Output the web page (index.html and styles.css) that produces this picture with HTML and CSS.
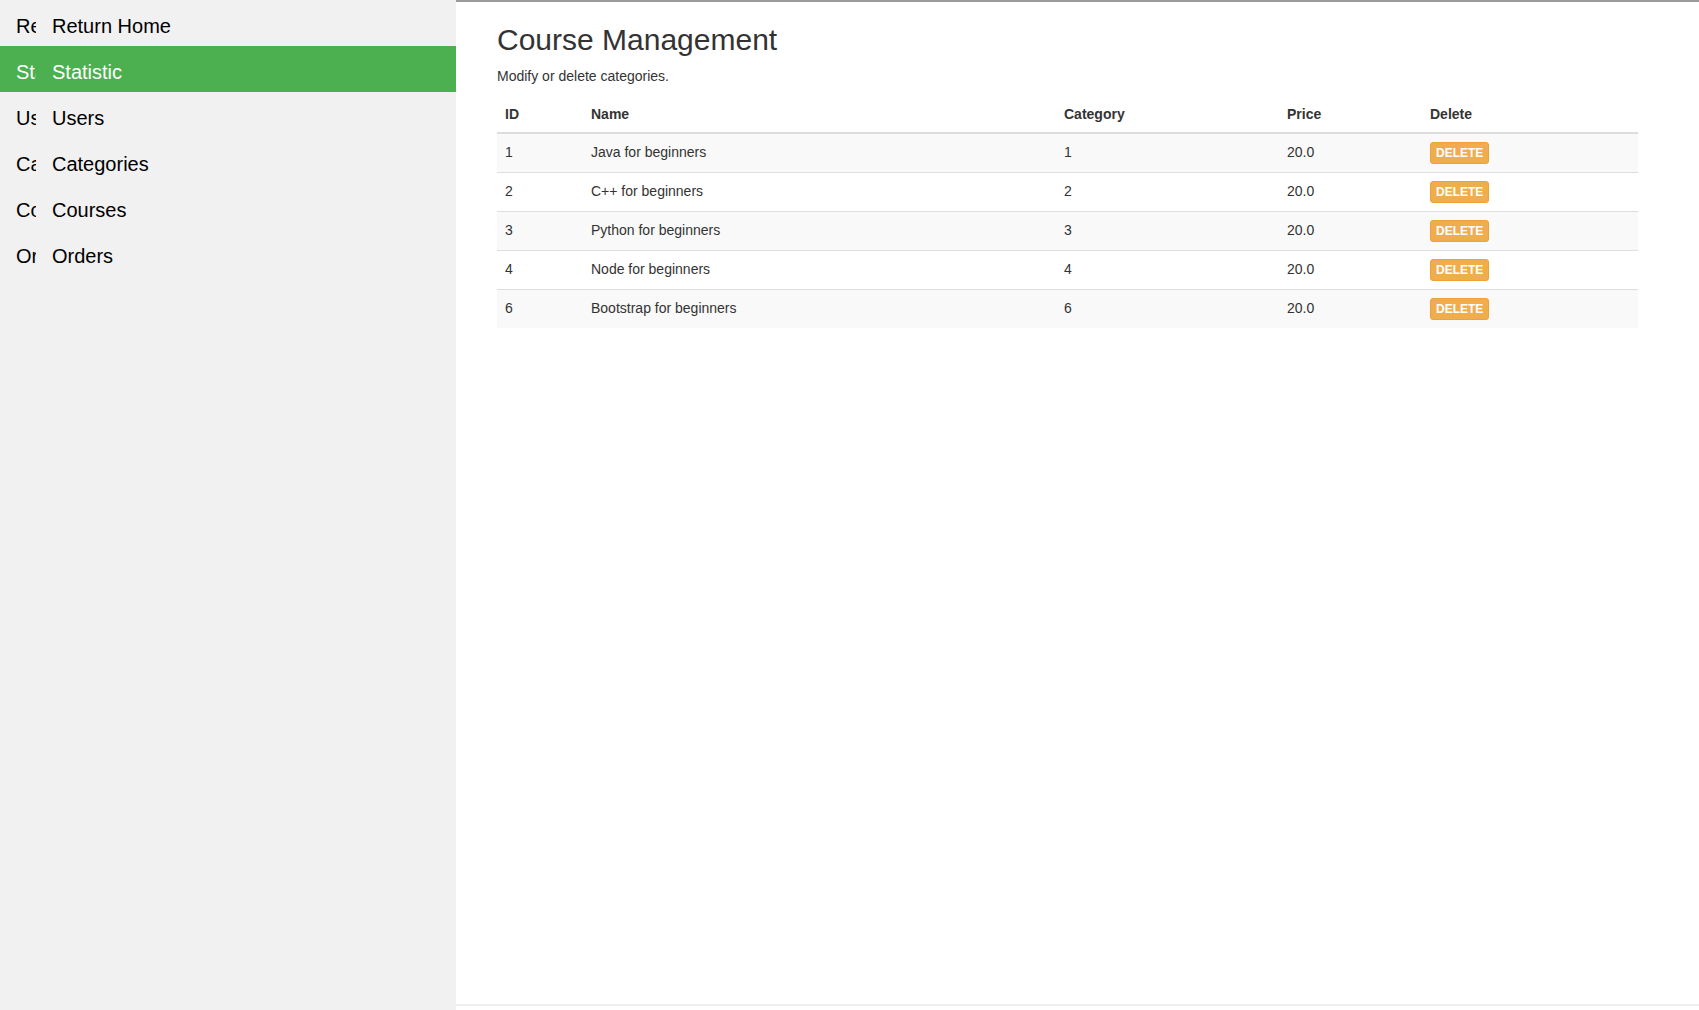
FILE: index.html
```html
<!DOCTYPE html>
<html lang="en">
<head>
<meta charset="utf-8">
<title>Course Management</title>
<link rel="stylesheet" href="styles.css">
</head>
<body>
<div class="layout">
  <nav class="sidebar">
    <a class="nav-item" href="#"><span class="nav-icon">Return Home</span><span class="nav-label">Return Home</span></a>
    <a class="nav-item active" href="#"><span class="nav-icon">Statistic</span><span class="nav-label">Statistic</span></a>
    <a class="nav-item" href="#"><span class="nav-icon">Users</span><span class="nav-label">Users</span></a>
    <a class="nav-item" href="#"><span class="nav-icon">Categories</span><span class="nav-label">Categories</span></a>
    <a class="nav-item" href="#"><span class="nav-icon">Courses</span><span class="nav-label">Courses</span></a>
    <a class="nav-item" href="#"><span class="nav-icon">Orders</span><span class="nav-label">Orders</span></a>
  </nav>
  <main class="main">
    <div class="content">
      <h2 class="title">Course Management</h2>
      <p class="subtitle">Modify or delete categories.</p>
      <table class="table">
        <thead>
          <tr>
            <th class="col-id">ID</th>
            <th class="col-name">Name</th>
            <th class="col-cat">Category</th>
            <th class="col-price">Price</th>
            <th class="col-del">Delete</th>
          </tr>
        </thead>
        <tbody>
          <tr><td>1</td><td>Java for beginners</td><td>1</td><td>20.0</td><td><button class="btn-delete">DELETE</button></td></tr>
          <tr><td>2</td><td>C++ for beginners</td><td>2</td><td>20.0</td><td><button class="btn-delete">DELETE</button></td></tr>
          <tr><td>3</td><td>Python for beginners</td><td>3</td><td>20.0</td><td><button class="btn-delete">DELETE</button></td></tr>
          <tr><td>4</td><td>Node for beginners</td><td>4</td><td>20.0</td><td><button class="btn-delete">DELETE</button></td></tr>
          <tr><td>6</td><td>Bootstrap for beginners</td><td>6</td><td>20.0</td><td><button class="btn-delete">DELETE</button></td></tr>
        </tbody>
      </table>
    </div>
    <div class="footer-line"></div>
  </main>
</div>
</body>
</html>
```

FILE: styles.css
```css
* {
  box-sizing: border-box;
}

html, body {
  margin: 0;
  padding: 0;
  height: 100%;
  overflow: hidden;
}

body {
  font-family: "Liberation Sans", Arial, Helvetica, sans-serif;
  font-size: 14px;
  line-height: 20px;
  color: #333;
  background: #fff;
}

.layout {
  display: flex;
  height: 100vh;
}

.sidebar {
  width: 456px;
  flex: 0 0 456px;
  background: #f1f1f1;
  display: flex;
  flex-direction: column;
}

.nav-item {
  display: flex;
  align-items: flex-start;
  height: 46px;
  padding: 11px 16px 5px 16px;
  font-size: 20px;
  line-height: 30px;
  color: #000;
  text-decoration: none;
  white-space: nowrap;
}

.nav-item.active {
  background: #4caf50;
  color: #fff;
}

.nav-icon {
  display: block;
  width: 20px;
  overflow: hidden;
  margin-right: 16px;
  flex: 0 0 20px;
}

.main {
  flex: 1;
  display: flex;
  flex-direction: column;
  border-top: 2px solid #9a9a9a;
  min-width: 0;
}

.content {
  flex: 1;
  padding-left: 41px;
  padding-top: 1px;
}

.title {
  margin: 20px 0 10px 0;
  font-size: 30px;
  line-height: 33px;
  font-weight: normal;
  color: #333;
}

.subtitle {
  margin: 0 0 10px 0;
}

.table {
  width: 1141px;
  border-collapse: collapse;
  border-spacing: 0;
}

.table th {
  text-align: left;
  font-weight: bold;
  padding: 8px;
  vertical-align: bottom;
  border-bottom: 2px solid #ddd;
}

.table td {
  padding: 8px;
  vertical-align: top;
  border-top: 1px solid #ddd;
}

.table tbody tr:nth-child(odd) {
  background: #f9f9f9;
}

.col-id { width: 86px; }
.col-name { width: 473px; }
.col-cat { width: 223px; }
.col-price { width: 143px; }
.col-del { width: 216px; }

.btn-delete {
  display: inline-block;
  vertical-align: top;
  margin: 0;
  padding: 1px 5px;
  font-family: "Liberation Sans", Arial, Helvetica, sans-serif;
  font-size: 12px;
  line-height: 18px;
  font-weight: bold;
  color: #fff;
  background: #f0ad4e;
  border: 1px solid #eea236;
  border-radius: 3px;
  cursor: pointer;
}

.footer-line {
  height: 6px;
  border-top: 2px solid #eee;
  flex: 0 0 6px;
}
```
